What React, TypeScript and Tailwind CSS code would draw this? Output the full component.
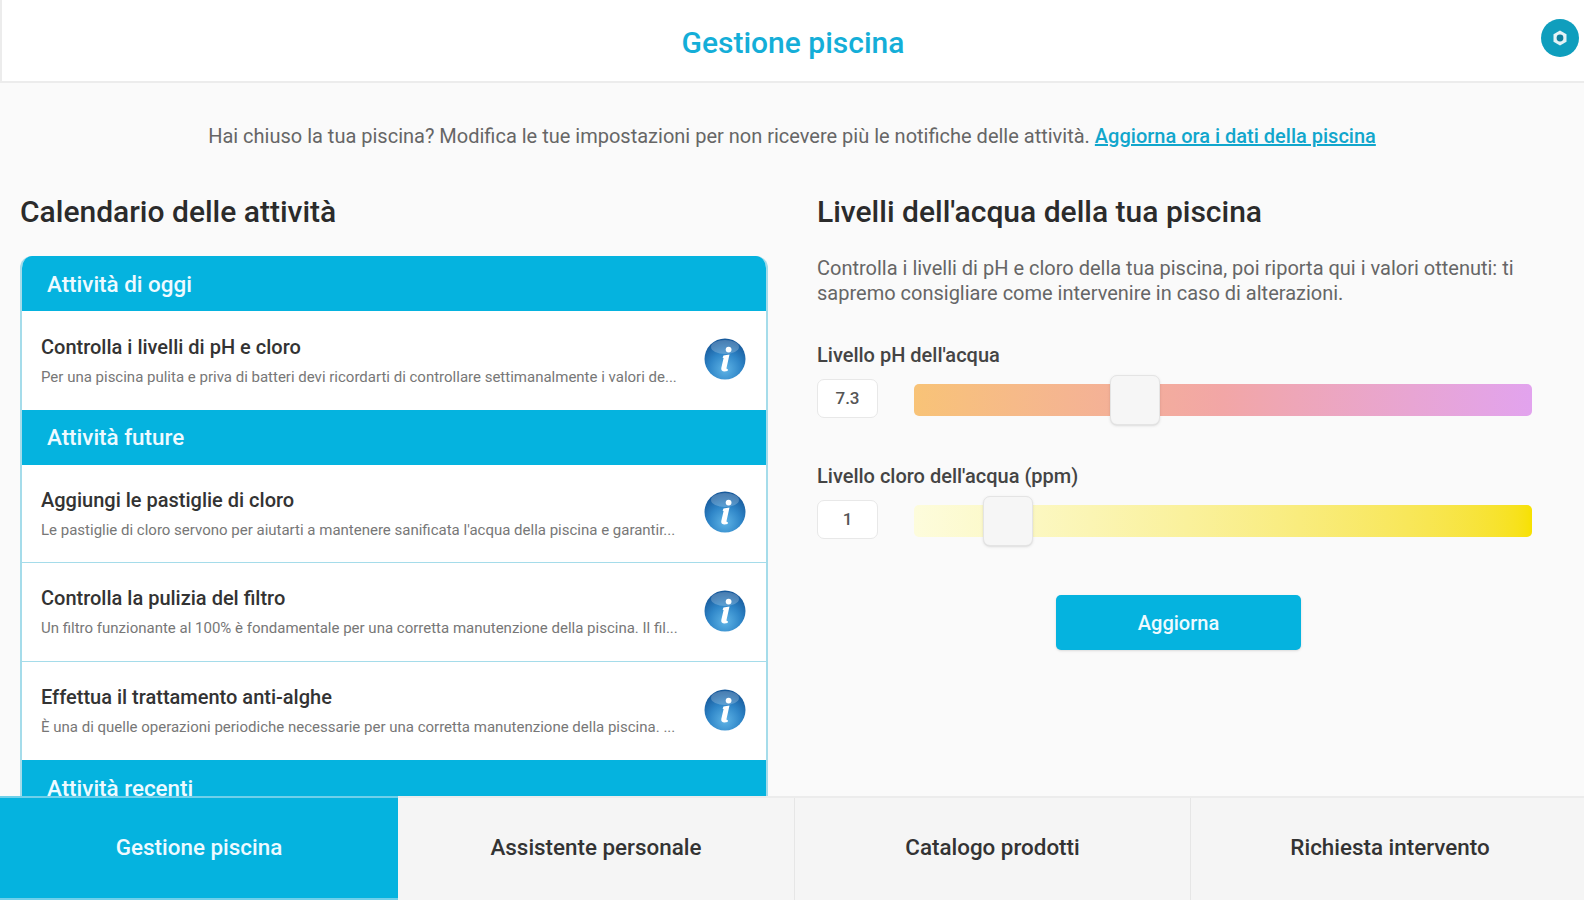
import { useId } from "react";

const font = { fontFamily: "Roboto, sans-serif" };

type Task = { title: string; desc: string };

const todayTasks: Task[] = [
  {
    title: "Controlla i livelli di pH e cloro",
    desc: "Per una piscina pulita e priva di batteri devi ricordarti di controllare settimanalmente i valori de...",
  },
];

const futureTasks: Task[] = [
  {
    title: "Aggiungi le pastiglie di cloro",
    desc: "Le pastiglie di cloro servono per aiutarti a mantenere sanificata l'acqua della piscina e garantir...",
  },
  {
    title: "Controlla la pulizia del filtro",
    desc: "Un filtro funzionante al 100% è fondamentale per una corretta manutenzione della piscina. Il fil...",
  },
  {
    title: "Effettua il trattamento anti-alghe",
    desc: "È una di quelle operazioni periodiche necessarie per una corretta manutenzione della piscina. ...",
  },
];

function InfoOrb() {
  const id = useId();
  return (
    <svg width="42" height="42" viewBox="0 0 42 42" className="mb-[2px] shrink-0">
      <defs>
        <radialGradient id={id} cx="50%" cy="75%" r="70%">
          <stop offset="0%" stopColor="#5fb4e6" />
          <stop offset="55%" stopColor="#2f86c8" />
          <stop offset="100%" stopColor="#175a9c" />
        </radialGradient>
      </defs>
      <circle cx="21" cy="21" r="20.5" fill={`url(#${id})`} />
      <ellipse cx="21" cy="9" rx="14" ry="7" fill="#ffffff" opacity="0.22" />
      <path d="M19.5 17.5 L25.5 16.5 L22.5 30 Q22.3 31.5 24 31 L23.6 33 Q16.6 34.5 17.3 30 L19.6 20 L18.6 19.8 Z" fill="#ffffff" />
      <circle cx="24.6" cy="11.6" r="2.9" fill="#ffffff" />
    </svg>
  );
}

function TaskRow({ task, last }: { task: Task; last?: boolean }) {
  return (
    <div className={`flex h-[98.5px] items-center bg-white pl-[19px] pr-[20px] ${last ? "" : "border-b border-[#a5dcea]"}`}>
      <div className="min-w-0 flex-1">
        <div className="text-[20px] leading-[24px] font-medium text-[#333333]">{task.title}</div>
        <div className="mt-[9px] whitespace-nowrap text-[15px] leading-[18px] text-[#777777]">{task.desc}</div>
      </div>
      <InfoOrb />
    </div>
  );
}

function SectionHeader({ label }: { label: string }) {
  return (
    <div className="flex h-[55px] shrink-0 items-center bg-[#05b3df] pt-[2px] pl-[25px] text-[22.4px] font-medium text-[#eefaff]">
      {label}
    </div>
  );
}

function LevelSlider({
  label,
  value,
  track,
  thumbLeft,
}: {
  label: string;
  value: string;
  track: string;
  thumbLeft: string;
}) {
  return (
    <div>
      <div className="text-[20px] leading-[24px] font-medium text-[#444444]">{label}</div>
      <div className="mt-[12px] flex items-center gap-[36px]">
        <div className="flex h-[39px] w-[61px] shrink-0 items-center justify-center rounded-[7px] border border-[#e8e8e8] bg-white text-[17px] font-medium text-[#555555]">
          {value}
        </div>
        <div className={`relative mt-[3px] h-[32px] w-[618px] rounded-[5px] ${track}`}>
          <div className={`absolute top-[-9px] h-[50px] w-[50px] rounded-[7px] border border-[#e4e4e4] bg-[#f6f6f6] shadow-sm ${thumbLeft}`} />
        </div>
      </div>
    </div>
  );
}

export default function App() {
  return (
    <div className="flex h-[900px] w-[1584px] flex-col overflow-hidden bg-[#fafafa]" style={font}>
      {/* header */}
      <header className="relative flex h-[83px] shrink-0 items-center justify-center border-b-2 border-l-2 border-[#ececec] bg-white">
        <h1 className="mt-[3px] text-[30px] font-medium text-[#14aed8]">Gestione piscina</h1>
        <svg width="38" height="38" viewBox="0 0 38 38" className="absolute top-[19px] right-[5px]">
          <circle cx="19" cy="19" r="19" fill="#0f9ebd" />
          <path d="M19 11.5 L25.5 15.2 V22.8 L19 26.5 L12.5 22.8 V15.2 Z" fill="#e4f3f6" />
          <circle cx="19" cy="19" r="3.4" fill="#0f7f9c" />
        </svg>
      </header>

      <main className="min-h-0 flex-1 overflow-hidden">
        <p className="pt-[41px] text-center text-[20px] leading-[24px] text-[#666666]">
          Hai chiuso la tua piscina? Modifica le tue impostazioni per non ricevere più le notifiche delle attività.{" "}
          <a className="font-medium text-[#11a6cc] underline">Aggiorna ora i dati della piscina</a>
        </p>

        <div className="mt-[47px] flex pl-[20px]">
          {/* calendario */}
          <section className="w-[748px] shrink-0">
            <h2 className="text-[30px] leading-[34px] font-medium text-[#2b2b2b]">Calendario delle attività</h2>
            <div className="mt-[27px] overflow-hidden rounded-t-[12px] border-x-2 border-[#a5dcea]">
              <SectionHeader label="Attività di oggi" />
              {todayTasks.map((t) => (
                <TaskRow key={t.title} task={t} last />
              ))}
              <SectionHeader label="Attività future" />
              {futureTasks.map((t, i) => (
                <TaskRow key={t.title} task={t} last={i === futureTasks.length - 1} />
              ))}
              <SectionHeader label="Attività recenti" />
            </div>
          </section>

          {/* livelli acqua */}
          <section className="ml-[49px] w-[720px] shrink-0">
            <h2 className="text-[30px] leading-[34px] font-medium text-[#2b2b2b]">Livelli dell'acqua della tua piscina</h2>
            <p className="mt-[27px] text-[20px] leading-[25px] text-[#666666]">
              Controlla i livelli di pH e cloro della tua piscina, poi riporta qui i valori ottenuti: ti
              <br />
              sapremo consigliare come intervenire in caso di alterazioni.
            </p>
            <div className="mt-[37px] flex flex-col gap-[46px]">
              <LevelSlider
                label="Livello pH dell'acqua"
                value="7.3"
                track="bg-gradient-to-r from-[#f8c377] via-[#f2a6a6] to-[#e2a3ee]"
                thumbLeft="left-[196px]"
              />
              <LevelSlider
                label="Livello cloro dell'acqua (ppm)"
                value="1"
                track="bg-gradient-to-r from-[#fdfcdc] to-[#f7e100]"
                thumbLeft="left-[69px]"
              />
            </div>
            <div className="mt-[56px] flex justify-center pl-[3px]">
              <button className="h-[55px] w-[245px] rounded-[5px] bg-[#05b3df] text-[20px] font-medium text-[#eefaff] shadow-sm">
                Aggiorna
              </button>
            </div>
          </section>
        </div>
      </main>

      {/* tab bar */}
      <nav className="grid h-[104px] shrink-0 grid-cols-[398px_396px_396px_394px] border-t-2 border-[#ececec] bg-[#f5f5f5] text-[22.4px] font-medium text-[#333333]">
        <div className="-mt-[2px] flex items-center justify-center border-y-2 border-[#6fd0ea] bg-[#05b3df] text-[#eefaff]">Gestione piscina</div>
        <div className="flex items-center justify-center pb-[2px]">Assistente personale</div>
        <div className="flex items-center justify-center border-l border-[#e6e6e6] pb-[2px]">Catalogo prodotti</div>
        <div className="flex items-center justify-center border-l border-[#e6e6e6] pb-[2px] pl-[5px]">Richiesta intervento</div>
      </nav>
    </div>
  );
}
